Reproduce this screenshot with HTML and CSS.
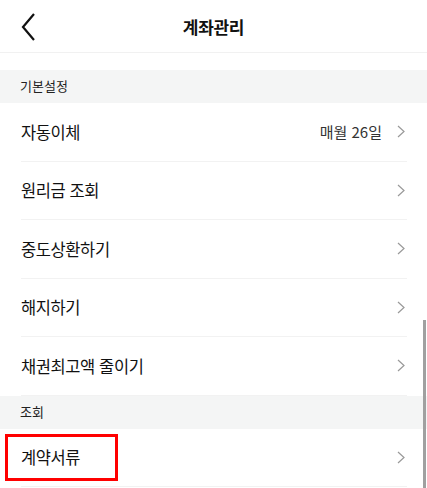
FILE: index.html
```html
<!DOCTYPE html>
<html lang="ko">

<head>
    <meta charset="UTF-8">
    <meta name="viewport" content="width=device-width, initial-scale=1.0">
    <title>계좌관리</title>
    <link rel="stylesheet" href="styles.css">
</head>

<body>
    <div class="page">
        <div class="header">
            <div class="back">
                <svg width="14" height="28" viewBox="0 0 14 28"><path d="M13 1 L2 14 L13 27" fill="none" stroke="#111" stroke-width="2.2"/></svg>
            </div>
            <div class="title">계좌관리</div>
        </div>

        <div class="section-title">기본설정</div>
        <div class="row"><span class="label">자동이체</span><span class="value">매월 26일</span><svg class="arrow" width="8" height="13" viewBox="0 0 8 13"><path d="M1 1 L7 6.5 L1 12" fill="none" stroke="#999" stroke-width="1.2"/></svg></div>
        <div class="row"><span class="label">원리금 조회</span><svg class="arrow" width="8" height="13" viewBox="0 0 8 13"><path d="M1 1 L7 6.5 L1 12" fill="none" stroke="#999" stroke-width="1.2"/></svg></div>
        <div class="row"><span class="label">중도상환하기</span><svg class="arrow" width="8" height="13" viewBox="0 0 8 13"><path d="M1 1 L7 6.5 L1 12" fill="none" stroke="#999" stroke-width="1.2"/></svg></div>
        <div class="row"><span class="label">해지하기</span><svg class="arrow" width="8" height="13" viewBox="0 0 8 13"><path d="M1 1 L7 6.5 L1 12" fill="none" stroke="#999" stroke-width="1.2"/></svg></div>
        <div class="row"><span class="label">채권최고액 줄이기</span><svg class="arrow" width="8" height="13" viewBox="0 0 8 13"><path d="M1 1 L7 6.5 L1 12" fill="none" stroke="#999" stroke-width="1.2"/></svg></div>

        <div class="section-title">조회</div>
        <div class="row"><span class="label">계약서류</span><svg class="arrow" width="8" height="13" viewBox="0 0 8 13"><path d="M1 1 L7 6.5 L1 12" fill="none" stroke="#999" stroke-width="1.2"/></svg></div>

        <!-- 강조 박스 / 스크롤바 -->
        <div class="highlight"></div>
        <div class="scrollbar"></div>
    </div>
</body>

</html>
```

FILE: styles.css
```css
* {
    box-sizing: border-box;
}

body {
    margin: 0;
    background: #fff;
    font-family: "Noto Sans CJK KR", "Noto Sans", sans-serif;
    color: #111;
}

.page {
    position: relative;
    width: 427px;
    height: 488px;
    overflow: hidden;
}

.header {
    position: relative;
    height: 53px;
    border-bottom: 1px solid #f1f1f1;
    display: flex;
    align-items: center;
    justify-content: center;
    margin-bottom: 17px;
}

.header .back {
    position: absolute;
    left: 21px;
    top: 13px;
    height: 28px;
}

.header .title {
    font-size: 17px;
    font-weight: 700;
    letter-spacing: -0.3px;
}

.section-title {
    height: 33px;
    line-height: 32px;
    padding-left: 20px;
    background: #f4f5f5;
    font-size: 13px;
    color: #222;
}

.row {
    display: flex;
    align-items: center;
    height: 58.5px;
    margin: 0 20px 0 21px;
    border-bottom: 1px solid #f2f2f2;
}

.row .label {
    flex: 1;
    font-size: 16.5px;
    letter-spacing: -0.4px;
    color: #111;
}

.row .value {
    font-size: 15px;
    color: #333;
    margin-right: 15px;
}

.row .arrow {
    display: block;
    margin-right: 2px;
}

.highlight {
    position: absolute;
    left: 5px;
    top: 434px;
    width: 113px;
    height: 47px;
    border: 3px solid #f00;
}

.scrollbar {
    position: absolute;
    right: 1px;
    top: 320px;
    width: 3px;
    height: 168px;
    background: #a0a0a0;
}
```
